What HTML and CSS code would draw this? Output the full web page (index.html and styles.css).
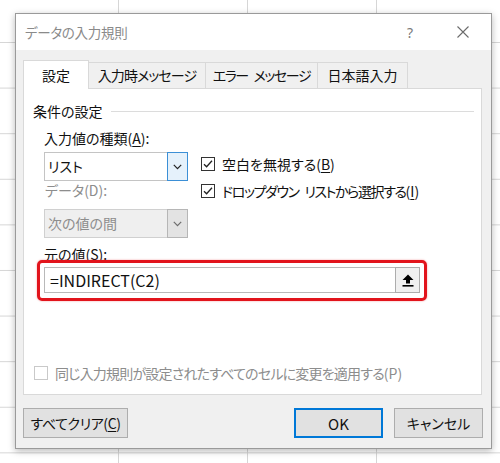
FILE: index.html
```html
<!DOCTYPE html>
<html lang="ja">
<head>
<meta charset="utf-8">
<title>データの入力規則</title>
<link rel="stylesheet" href="styles.css">
</head>
<body>
<div class="dialog">
  <div class="titlebar">
    <span class="title">データの入力規則</span>
    <span class="help">?</span>
    <span class="close">
      <svg width="12" height="12" viewBox="0 0 12 12"><path d="M0.5 0.5 L11.5 11.5 M11.5 0.5 L0.5 11.5" stroke="#6b6b6b" stroke-width="1.1" fill="none"/></svg>
    </span>
  </div>

  <div class="tabs">
    <div class="tab active">設定</div>
    <div class="tab tab-input">入力時メッセージ</div>
    <div class="tab tab-error">エラー メッセージ</div>
    <div class="tab tab-ime">日本語入力</div>
  </div>

  <div class="panel">
    <div class="group-head"><span>条件の設定</span><span class="rule"></span></div>

    <div class="field-label first">入力値の種類(<u>A</u>):</div>
    <div class="criteria">
      <div class="col-left">
        <div class="combo">
          <span class="combo-text">リスト</span>
          <span class="combo-btn hot">
            <svg width="9" height="6" viewBox="0 0 9 6"><path d="M0.8 0.8 L4.5 4.6 L8.2 0.8" stroke="#222" stroke-width="1.2" fill="none"/></svg>
          </span>
        </div>
        <div class="field-label off">データ(D):</div>
        <div class="combo disabled">
          <span class="combo-text">次の値の間</span>
          <span class="combo-btn">
            <svg width="9" height="6" viewBox="0 0 9 6"><path d="M0.8 0.8 L4.5 4.6 L8.2 0.8" stroke="#6d6d6d" stroke-width="1.2" fill="none"/></svg>
          </span>
        </div>
      </div>
      <div class="col-right">
        <div class="check">
          <svg class="box" width="14" height="14" viewBox="0 0 14 14"><rect x="0.5" y="0.5" width="13" height="13" fill="#fff" stroke="#333"/><path d="M3 7.2 L5.6 9.8 L11 3.8" stroke="#222" stroke-width="1.3" fill="none"/></svg>
          <span>空白を無視する(<u>B</u>)</span>
        </div>
        <div class="check">
          <svg class="box" width="14" height="14" viewBox="0 0 14 14"><rect x="0.5" y="0.5" width="13" height="13" fill="#fff" stroke="#333"/><path d="M3 7.2 L5.6 9.8 L11 3.8" stroke="#222" stroke-width="1.3" fill="none"/></svg>
          <span><span class="tight">ドロップダウン リストから選択する</span>(<u>I</u>)</span>
        </div>
      </div>
    </div>

    <div class="field-label source">元の値(<u>S</u>):</div>
    <div class="highlight">
      <div class="ref-input">
        <span class="ref-text">=INDIRECT(C2)</span>
        <span class="ref-btn">
          <svg width="12" height="13" viewBox="0 0 12 13"><path d="M6 0.5 L11.5 6 H8 V9.5 H4 V6 H0.5 Z" fill="#000"/><rect x="0.5" y="11" width="11" height="1.6" fill="#000"/></svg>
        </span>
      </div>
    </div>

    <div class="apply-all">
      <span class="box-off"></span>
      <span><span class="tight-s">同じ入力規則が設定されたすべてのセルに変更を適用する</span>(P)</span>
    </div>
  </div>

  <div class="footer">
    <button class="btn clear">すべてクリア(<u>C</u>)</button>
    <span class="spacer"></span>
    <button class="btn ok">OK</button>
    <button class="btn">キャンセル</button>
  </div>
</div>
</body>
</html>
```

FILE: styles.css
```css
html, body {
  margin: 0;
  padding: 0;
}

body {
  width: 500px;
  height: 463px;
  overflow: hidden;
  font-family: "Noto Sans CJK JP", "Noto Sans", sans-serif;
  font-feature-settings: "palt";
  font-size: 14px;
  color: #111;
  /* worksheet grid behind the dialog */
  background:
    linear-gradient(to right, #d6d6d6 1px, transparent 1px) 118px 0 / 129px 100%,
    linear-gradient(to bottom, #d6d6d6 1px, transparent 1px) 0 42px / 100% 45.6px,
    #fff;
}

u {
  text-decoration: underline;
  text-underline-offset: 2px;
}

.dialog {
  margin: 13px 0 0 15px;
  width: 477px;
  height: 436px;
  box-sizing: border-box;
  border: 1px solid #9a9a9a;
  background: #f0f0f0;
  box-shadow: 0 2px 7px rgba(0, 0, 0, 0.28);
  display: flex;
  flex-direction: column;
}

/* title bar */
.titlebar {
  height: 36px;
  background: #fff;
  display: flex;
  align-items: center;
  padding-left: 9px;
  flex: none;
}

.title {
  font-size: 13.5px;
  color: #8a8a8a;
  letter-spacing: -0.3px;
  flex: 1;
}

.help {
  font-family: "Noto Sans", sans-serif;
  font-size: 14px;
  color: #7a7a7a;
  width: 12px;
  text-align: center;
  margin-right: 41px;
}

.close {
  display: flex;
  margin-right: 22px;
}

/* tabs */
.tabs {
  margin: 10px 0 0 7px;
  height: 28px;
  display: flex;
  align-items: flex-end;
  flex: none;
}

.tab {
  height: 26px;
  box-sizing: border-box;
  border: 1px solid #d9d9d9;
  border-bottom: none;
  border-left: none;
  background: #f0f0f0;
  line-height: 25px;
  font-size: 14px;
  text-align: center;
  white-space: nowrap;
}

.tab-input {
  width: 117px;
  letter-spacing: -0.9px;
}

.tab-error {
  width: 112px;
  letter-spacing: -1.4px;
  word-spacing: 4px;
}

.tab-ime {
  width: 90px;
}

.tab.active {
  height: 29px;
  margin-bottom: -1px;
  background: #fff;
  border-left: 1px solid #d9d9d9;
  line-height: 28px;
  width: 66px;
  position: relative;
  z-index: 1;
}

/* tab page */
.panel {
  margin-left: 7px;
  width: 459px;
  height: 307px;
  box-sizing: border-box;
  border: 1px solid #d9d9d9;
  background: #fff;
  padding: 12px 7px 11px 9px;
  display: flex;
  flex-direction: column;
  flex: none;
}

.group-head {
  display: flex;
  align-items: center;
  line-height: 20px;
}

.group-head .rule {
  flex: 1;
  height: 1px;
  background: #dcdcdc;
  margin-left: 8px;
}

.field-label {
  line-height: 18px;
  margin-left: 11px;
}

.field-label.first {
  line-height: 20px;
  margin-top: 7px;
}

.field-label.off {
  color: #8d8d8d;
}

.field-label.source {
  margin-top: 7px;
}

.criteria {
  margin: 4px 0 0 11px;
  display: flex;
  gap: 13px;
}

.col-left {
  width: 144px;
  display: flex;
  flex-direction: column;
}

.col-left .field-label {
  margin-left: 1px;
}

.combo {
  height: 29px;
  box-sizing: border-box;
  border: 1px solid #c4c4c4;
  background: #fff;
  display: flex;
  align-items: stretch;
}

.combo.disabled {
  margin-top: 10px;
  background: #efefef;
  border-color: #d0d0d0;
  color: #8d8d8d;
}

.combo-text {
  flex: 1;
  padding-left: 3px;
  line-height: 27px;
}

.combo-btn {
  width: 19px;
  display: flex;
  align-items: center;
  justify-content: center;
  border-left: 1px solid #c4c4c4;
  background: #fff;
}

.combo-btn.hot {
  background: #e5f1fb;
  border: 1px solid #3b8fd6;
  margin: -1px -1px -1px 0;
}

.combo.disabled .combo-btn {
  background: #e3e3e3;
  border: 1px solid #b6b6b6;
  margin: -1px -1px -1px 0;
}

.col-right {
  display: flex;
  flex-direction: column;
  gap: 3px;
}

.check {
  height: 24px;
  display: flex;
  align-items: center;
  gap: 7px;
  white-space: nowrap;
}

.check .box {
  flex: none;
}

.check .tight {
  letter-spacing: -1.4px;
  word-spacing: 4px;
}

/* red frame around the source field */
.highlight {
  margin: -3px 0 0 4px;
  width: 390px;
  box-sizing: border-box;
  border: 3px solid #e2141c;
  border-radius: 5px;
  padding: 4px 4px 5px 4px;
  box-shadow: 0 0 2px rgba(226, 20, 28, 0.45);
}

.ref-input {
  height: 26px;
  box-sizing: border-box;
  border: 1px solid #b9b9b9;
  display: flex;
  align-items: stretch;
}

.ref-text {
  flex: 1;
  font-size: 16px;
  line-height: 24px;
  padding-left: 5px;
}

.ref-btn {
  width: 25px;
  box-sizing: border-box;
  border: 1px solid #adadad;
  background: #f0f0f0;
  margin: -1px -1px -1px 0;
  display: flex;
  align-items: center;
  justify-content: center;
}

.apply-all {
  margin-top: auto;
  display: flex;
  align-items: center;
  gap: 7px;
  line-height: 20px;
  color: #8d8d8d;
  white-space: nowrap;
}

.apply-all .tight-s {
  letter-spacing: -0.8px;
}

.box-off {
  width: 12px;
  height: 12px;
  border: 1px solid #c9c9c9;
  background: #fff;
  flex: none;
  margin-left: 1px;
}

/* buttons */
.footer {
  margin: 13px 8px 0 7px;
  display: flex;
  gap: 11px;
}

.spacer {
  flex: 1;
}

.btn {
  height: 30px;
  width: 89px;
  box-sizing: border-box;
  border: 1px solid #adadad;
  background: #e1e1e1;
  font-family: inherit;
  font-feature-settings: "palt";
  font-size: 14px;
  color: #111;
  padding: 0;
}

.btn.clear {
  width: 105px;
  letter-spacing: -0.4px;
}

.btn.ok {
  border: 2px solid #0078d7;
  font-size: 15px;
}
```
